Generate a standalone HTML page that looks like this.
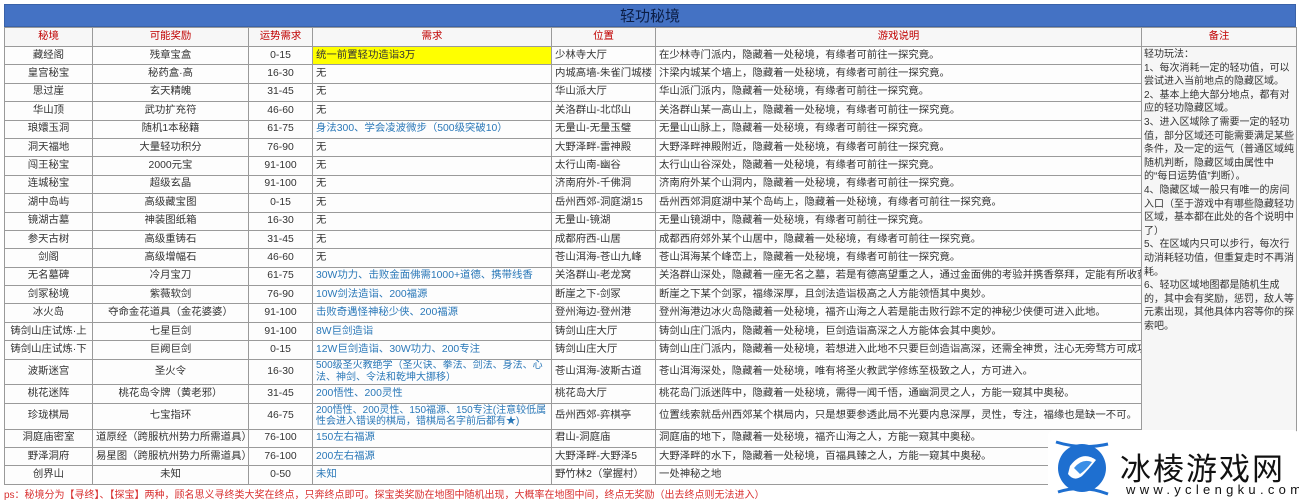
<!DOCTYPE html>
<html><head><meta charset="utf-8">
<style>
*{margin:0;padding:0;box-sizing:border-box}
body{width:1299px;height:500px;background:#fff;font-family:"Liberation Sans","Noto Sans CJK SC",sans-serif;font-size:10.4px;color:#333;position:relative;overflow:hidden}
.title{position:absolute;left:4px;top:4px;width:1292px;height:23px;background:#4472c4;color:#0b1d44;font-size:15px;text-align:center;line-height:23px;border:1px solid #3a62a8}
table{position:absolute;left:4px;top:27px;width:1292px;border-collapse:collapse;table-layout:fixed}
td{border:1px solid #9a9a9a;padding:0 3px;white-space:nowrap;overflow:hidden;line-height:12px;background:#fdfdfd}
tr{height:18.4px}
tr.h td{color:#c00000;text-align:center;height:19px;background:#f7f7f7}
td.c{text-align:center}
td.b{color:#2a78b8}
td.y{background:#ffff00}
td.w{white-space:normal;line-height:11.5px;font-size:10px}
td.n{vertical-align:top;white-space:normal;line-height:13.6px;font-size:10px;padding:1px 2px;background:#f6f6f6}
.ps{position:absolute;left:4px;top:486px;color:#d83030;font-size:10px;white-space:nowrap}
.wm{position:absolute;left:1048px;top:430px;width:251px;height:70px;background:#fff;border-radius:6px}
.wm .t{position:absolute;left:72px;top:14px;font-size:31px;color:#111;letter-spacing:2px;white-space:nowrap}
.wm .u{position:absolute;left:78px;top:52px;font-size:13px;color:#111;letter-spacing:4.3px;white-space:nowrap}
</style></head><body>
<div class="title">轻功秘境</div>
<table>
<colgroup><col style="width:88px"><col style="width:156px"><col style="width:64px"><col style="width:239px"><col style="width:104px"><col style="width:486px"><col style="width:155px"></colgroup>
<tr class="h"><td>秘境</td><td>可能奖励</td><td>运势需求</td><td>需求</td><td>位置</td><td>游戏说明</td><td>备注</td></tr>
<tr><td class="c">藏经阁</td><td class="c">残章宝盒</td><td class="c">0-15</td><td class="y">统一前置轻功造诣3万</td><td>少林寺大厅</td><td>在少林寺门派内，隐藏着一处秘境，有缘者可前往一探究竟。</td>
<td class="n" rowspan="23">轻功玩法：<br>1、每次消耗一定的轻功值，可以尝试进入当前地点的隐藏区域。<br>2、基本上绝大部分地点，都有对应的轻功隐藏区域。<br>3、进入区域除了需要一定的轻功值，部分区域还可能需要满足某些条件，及一定的运气（普通区域纯随机判断，隐藏区域由属性中的“每日运势值”判断）。<br>4、隐藏区域一般只有唯一的房间入口（至于游戏中有哪些隐藏轻功区域，基本都在此处的各个说明中了）<br>5、在区域内只可以步行，每次行动消耗轻功值，但重复走时不再消耗。<br>6、轻功区域地图都是随机生成的，其中会有奖励，惩罚，敌人等元素出现，其他具体内容等你的探索吧。</td></tr>
<tr><td class="c">皇宫秘宝</td><td class="c">秘药盒·高</td><td class="c">16-30</td><td>无</td><td>内城高墙-朱雀门城楼</td><td>汴梁内城某个墙上，隐藏着一处秘境，有缘者可前往一探究竟。</td></tr>
<tr><td class="c">思过崖</td><td class="c">玄天精魄</td><td class="c">31-45</td><td>无</td><td>华山派大厅</td><td>华山派门派内，隐藏着一处秘境，有缘者可前往一探究竟。</td></tr>
<tr><td class="c">华山顶</td><td class="c">武功扩充符</td><td class="c">46-60</td><td>无</td><td>关洛群山-北邙山</td><td>关洛群山某一高山上，隐藏着一处秘境，有缘者可前往一探究竟。</td></tr>
<tr><td class="c">琅嬛玉洞</td><td class="c">随机1本秘籍</td><td class="c">61-75</td><td class="b">身法300、学会凌波微步（500级突破10）</td><td>无量山-无量玉璧</td><td>无量山山脉上，隐藏着一处秘境，有缘者可前往一探究竟。</td></tr>
<tr><td class="c">洞天福地</td><td class="c">大量轻功积分</td><td class="c">76-90</td><td>无</td><td>大野泽畔-雷神殿</td><td>大野泽畔神殿附近，隐藏着一处秘境，有缘者可前往一探究竟。</td></tr>
<tr><td class="c">闯王秘宝</td><td class="c">2000元宝</td><td class="c">91-100</td><td>无</td><td>太行山南-幽谷</td><td>太行山山谷深处，隐藏着一处秘境，有缘者可前往一探究竟。</td></tr>
<tr><td class="c">连城秘宝</td><td class="c">超级玄晶</td><td class="c">91-100</td><td>无</td><td>济南府外-千佛洞</td><td>济南府外某个山洞内，隐藏着一处秘境，有缘者可前往一探究竟。</td></tr>
<tr><td class="c">湖中岛屿</td><td class="c">高级藏宝图</td><td class="c">0-15</td><td>无</td><td>岳州西郊-洞庭湖15</td><td>岳州西郊洞庭湖中某个岛屿上，隐藏着一处秘境，有缘者可前往一探究竟。</td></tr>
<tr><td class="c">镜湖古墓</td><td class="c">神装图纸箱</td><td class="c">16-30</td><td>无</td><td>无量山-镜湖</td><td>无量山镜湖中，隐藏着一处秘境，有缘者可前往一探究竟。</td></tr>
<tr><td class="c">参天古树</td><td class="c">高级重铸石</td><td class="c">31-45</td><td>无</td><td>成都府西-山居</td><td>成都西府郊外某个山居中，隐藏着一处秘境，有缘者可前往一探究竟。</td></tr>
<tr><td class="c">剑阁</td><td class="c">高级增幅石</td><td class="c">46-60</td><td>无</td><td>苍山洱海-苍山九峰</td><td>苍山洱海某个峰峦上，隐藏着一处秘境，有缘者可前往一探究竟。</td></tr>
<tr><td class="c">无名墓碑</td><td class="c">冷月宝刀</td><td class="c">61-75</td><td class="b">30W功力、击败金面佛需1000+道德、携带线香</td><td>关洛群山-老龙窝</td><td>关洛群山深处，隐藏着一座无名之墓，若是有德高望重之人，通过金面佛的考验并携香祭拜，定能有所收获。</td></tr>
<tr><td class="c">剑冢秘境</td><td class="c">紫薇软剑</td><td class="c">76-90</td><td class="b">10W剑法造诣、200福源</td><td>断崖之下-剑冢</td><td>断崖之下某个剑冢，福缘深厚，且剑法造诣极高之人方能领悟其中奥妙。</td></tr>
<tr><td class="c">冰火岛</td><td class="c">夺命金花道具（金花婆婆）</td><td class="c">91-100</td><td class="b">击败奇遇怪神秘少侠、200福源</td><td>登州海边-登州港</td><td>登州海港边冰火岛隐藏着一处秘境，福齐山海之人若是能击败行踪不定的神秘少侠便可进入此地。</td></tr>
<tr><td class="c">铸剑山庄试炼·上</td><td class="c">七星巨剑</td><td class="c">91-100</td><td class="b">8W巨剑造诣</td><td>铸剑山庄大厅</td><td>铸剑山庄门派内，隐藏着一处秘境，巨剑造诣高深之人方能体会其中奥妙。</td></tr>
<tr><td class="c">铸剑山庄试炼·下</td><td class="c">巨阙巨剑</td><td class="c">0-15</td><td class="b">12W巨剑造诣、30W功力、200专注</td><td>铸剑山庄大厅</td><td>铸剑山庄门派内，隐藏着一处秘境，若想进入此地不只要巨剑造诣高深，还需全神贯，注心无旁骛方可成功。</td></tr>
<tr style="height:25px"><td class="c">波斯迷宫</td><td class="c">圣火令</td><td class="c">16-30</td><td class="b w">500级圣火教绝学（圣火诀、拳法、剑法、身法、心法、神剑、令法和乾坤大挪移）</td><td>苍山洱海-波斯古道</td><td>苍山洱海深处，隐藏着一处秘境，唯有将圣火教武学修练至极致之人，方可进入。</td></tr>
<tr style="height:19px"><td class="c">桃花迷阵</td><td class="c">桃花岛令牌（黄老邪）</td><td class="c">31-45</td><td class="b">200悟性、200灵性</td><td>桃花岛大厅</td><td>桃花岛门派迷阵中，隐藏着一处秘境，需得一闻千悟，通幽洞灵之人，方能一窥其中奥秘。</td></tr>
<tr style="height:26px"><td class="c">珍珑棋局</td><td class="c">七宝指环</td><td class="c">46-75</td><td class="b w">200悟性、200灵性、150福源、150专注(注意较低属性会进入错误的棋局，错棋局名字前后都有★)</td><td>岳州西郊-弈棋亭</td><td>位置线索就岳州西郊某个棋局内，只是想要参透此局不光要内息深厚，灵性，专注，福缘也是缺一不可。</td></tr>
<tr><td class="c">洞庭庙密室</td><td class="c">道原经（跨服杭州势力所需道具）</td><td class="c">76-100</td><td class="b">150左右福源</td><td>君山-洞庭庙</td><td>洞庭庙的地下，隐藏着一处秘境，福齐山海之人，方能一窥其中奥秘。</td></tr>
<tr><td class="c">野泽洞府</td><td class="c">易星图（跨服杭州势力所需道具）</td><td class="c">76-100</td><td class="b">200左右福源</td><td>大野泽畔-大野泽5</td><td>大野泽畔的水下，隐藏着一处秘境，百福具臻之人，方能一窥其中奥秘。</td></tr>
<tr><td class="c">创界山</td><td class="c">未知</td><td class="c">0-50</td><td class="b">未知</td><td>野竹林2（掌握村）</td><td>一处神秘之地</td></tr>
</table>
<div class="ps">ps：秘境分为【寻终】、【探宝】两种，顾名思义寻终类大奖在终点，只奔终点即可。探宝类奖励在地图中随机出现，大概率在地图中间，终点无奖励（出去终点则无法进入）</div>
<div class="wm">
<svg style="position:absolute;left:4px;top:6px" width="60" height="60" viewBox="0 0 60 60">
<circle cx="30" cy="32" r="24" fill="#1e6fd0"/>
<path d="M18 30 Q30 14 44 24 Q36 34 30 40 Q22 46 16 38Z" fill="#fff"/>
<path d="M22 32 Q30 22 40 26 Q34 34 28 38Z" fill="#3a8ee6"/>
<path d="M4 6 Q30 14 56 8" stroke="#1e6fd0" stroke-width="3" fill="none"/>
<path d="M6 56 Q30 48 56 58" stroke="#1e6fd0" stroke-width="3" fill="none"/>
</svg>
<div class="t">冰棱游戏网</div>
<div class="u">www.yclengku.com</div>
</div>
</body></html>
